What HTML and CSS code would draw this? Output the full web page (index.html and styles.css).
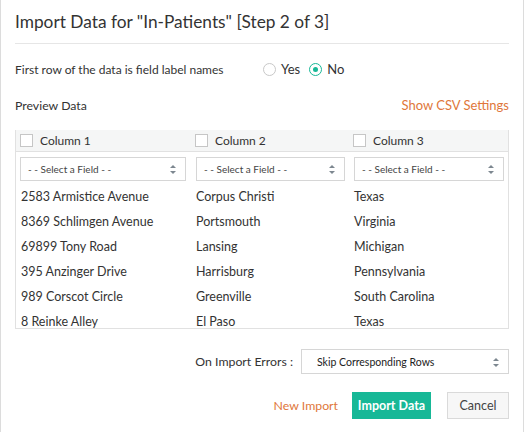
FILE: index.html
```html
<!DOCTYPE html>
<html>
<head>
<meta charset="utf-8">
<link rel="stylesheet" href="styles.css">
</head>
<body>
<div class="dialog">
  <h1 class="title">Import Data for "In-Patients" [Step 2 of 3]</h1>
  <div class="option-row">
    <span class="option-label">First row of the data is field label names</span>
    <label class="radio"><span class="radio-dot"></span>Yes</label>
    <label class="radio checked"><span class="radio-dot"></span>No</label>
  </div>
  <div class="preview-head">
    <span>Preview Data</span>
    <a class="link csv">Show CSV Settings</a>
  </div>
  <div class="preview">
    <div class="grid">
      <div class="hcell"><span class="check"></span>Column 1</div>
      <div class="hcell"><span class="check"></span>Column 2</div>
      <div class="hcell"><span class="check"></span>Column 3</div>
      <div class="scell"><div class="select small">- - Select a Field - -<span class="arrows"></span></div></div>
      <div class="scell"><div class="select small">- - Select a Field - -<span class="arrows"></span></div></div>
      <div class="scell"><div class="select small">- - Select a Field - -<span class="arrows"></span></div></div>
      <div class="cell">2583 Armistice Avenue</div><div class="cell">Corpus Christi</div><div class="cell">Texas</div>
      <div class="cell">8369 Schlimgen Avenue</div><div class="cell">Portsmouth</div><div class="cell">Virginia</div>
      <div class="cell">69899 Tony Road</div><div class="cell">Lansing</div><div class="cell">Michigan</div>
      <div class="cell">395 Anzinger Drive</div><div class="cell">Harrisburg</div><div class="cell">Pennsylvania</div>
      <div class="cell">989 Corscot Circle</div><div class="cell">Greenville</div><div class="cell">South Carolina</div>
      <div class="cell">8 Reinke Alley</div><div class="cell">El Paso</div><div class="cell">Texas</div>
    </div>
  </div>
  <div class="errors-row">
    <span class="errors-label">On Import Errors :</span>
    <div class="select wide">Skip Corresponding Rows<span class="arrows"></span></div>
  </div>
  <div class="actions">
    <a class="link new">New Import</a>
    <button class="btn primary">Import Data</button>
    <button class="btn cancel">Cancel</button>
  </div>
</div>
</body>
</html>
```
FILE: styles.css
```css
* { box-sizing: border-box; }
html, body { margin: 0; padding: 0; background: #fff; }
body { font-family: Lato, "Open Sans", sans-serif; color: #333; font-size: 12.3px; }
.dialog {
  width: 524px;
  height: 432px;
  border-left: 1px solid #dcdcdc;
  border-right: 1px solid #dcdcdc;
  padding: 0 14px;
  overflow: hidden;
}
.title {
  margin: 0;
  font-size: 17.3px;
  font-weight: 400;
  line-height: 22px;
  padding-top: 11px;
  padding-bottom: 10px;
  border-bottom: 1px solid #e6e6e6;
  color: #333;
}
.option-row {
  display: flex;
  align-items: center;
  height: 24px;
  margin-top: 13px;
  font-size: 12px;
}
.option-label { width: 248px; }
.radio { display: flex; align-items: center; margin-right: 9px; font-size: 13px; }
.radio-dot {
  width: 13px; height: 13px; border-radius: 50%;
  border: 1px solid #c8c8c8; margin-right: 5px; position: relative;
}
.radio.checked .radio-dot { border-color: #17b897; }
.radio.checked .radio-dot::after {
  content: ""; position: absolute; left: 3px; top: 3px;
  width: 5px; height: 5px; border-radius: 50%; background: #17b897;
}
.preview-head {
  display: flex; justify-content: space-between; align-items: center;
  margin-top: 14px; height: 20px;
}
.link { color: #e0773b; }
.csv { font-size: 13px; }
.preview {
  margin-top: 15px;
  height: 199px;
  border: 1px solid #e1e1e1;
  border-top: none;
  overflow: hidden;
}
.grid {
  display: grid;
  grid-template-columns: 175px 158px 1fr;
  font-size: 12.5px;
}
.hcell {
  background: #f5f6f6;
  height: 22px;
  border-bottom: 1px solid #e1e1e1;
  display: flex; align-items: center;
  padding-left: 4px;
  font-size: 12px;
}
.check {
  width: 13px; height: 13px; border: 1px solid #c6c6c6; background: #fff;
  margin-right: 7px;
}
.scell { padding: 5px 4px 4px; }
.select {
  position: relative;
  border: 1px solid #d6d6d6;
  background: #fff;
  display: flex; align-items: center;
}
.select.small { height: 24px; font-size: 10px; padding-left: 7px; color: #444; width: 166px; }
.scell:nth-child(5) .select { width: 149px; margin-left: 1px; }
.scell:nth-child(6) .select { width: 150px; margin-left: 1px; }
.arrows {
  position: absolute; right: 9px; top: 50%; width: 6px; height: 9px; margin-top: -4px;
}
.arrows::before, .arrows::after {
  content: ""; position: absolute; left: 0;
  border-left: 3px solid transparent; border-right: 3px solid transparent;
}
.arrows::before { top: 0; border-bottom: 3px solid #7d8790; }
.arrows::after { bottom: 0; border-top: 3px solid #7d8790; }
.cell {
  height: 25px; line-height: 24px; padding-left: 5px; white-space: nowrap;
}
.errors-row {
  display: flex; justify-content: flex-end; align-items: center;
  margin-top: 20px;
}
.errors-label { margin-right: 8px; }
.select.wide { width: 208px; height: 25px; font-size: 10.5px; padding-left: 15px; color: #222; }
.actions {
  display: flex; justify-content: flex-end; align-items: center;
  margin-top: 18px;
}
.btn {
  font-family: inherit; height: 27px; font-size: 12.5px; border-radius: 0;
  cursor: pointer; padding: 0; white-space: nowrap;
}
.new { margin-right: 14px; }
.primary {
  width: 79px; background: #17b897; color: #fff; border: 1px solid #17b897; font-weight: 700;
  margin-right: 16px;
}
.cancel { width: 62px; background: #f7f7f7; color: #444; border: 1px solid #dadada; }
```
